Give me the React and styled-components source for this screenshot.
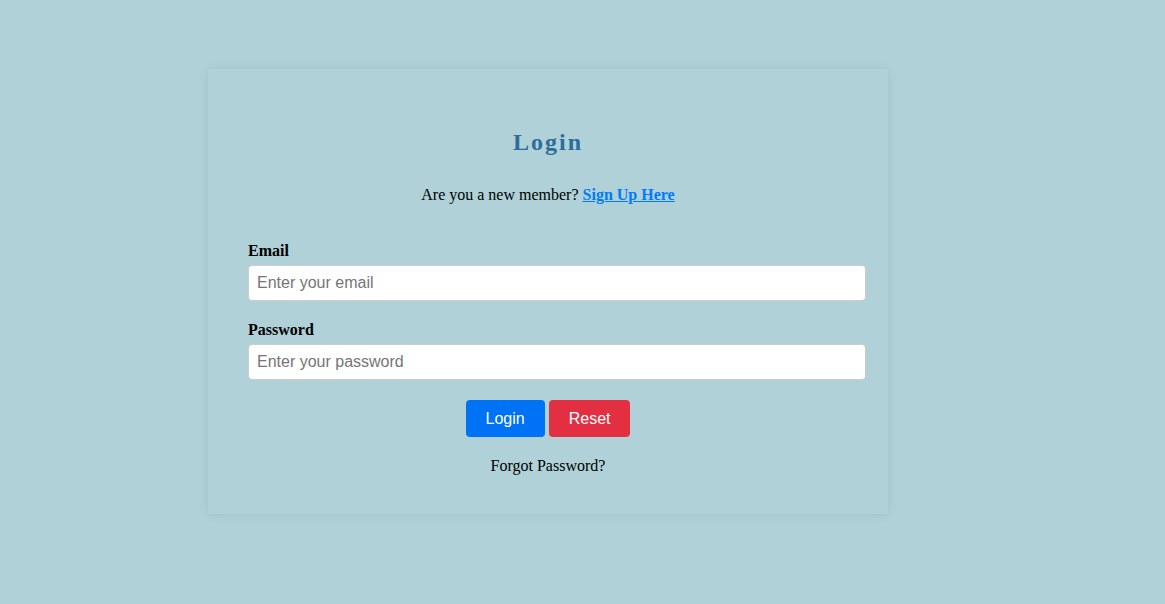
import React from "react";
import styled, { createGlobalStyle } from "styled-components";

const GlobalStyle = createGlobalStyle`
  html, body {
    margin: 0;
    padding: 0;
    background: #afd1d7;
    font-family: "Liberation Serif", "Times New Roman", serif;
    font-size: 16px;
    color: #000;
  }
  * { box-sizing: content-box; }
`;

const Page = styled.div`
  min-height: 604px;
  padding: 69px 0 0 208px;
  box-sizing: border-box;
`;

const Card = styled.div`
  width: 600px;
  padding: 40px 40px 39px;
  background: #afd1d7;
  box-shadow: 0 0 10px rgba(0, 0, 0, 0.08);
`;

const Title = styled.h2`
  margin: 20px 0 30px;
  text-align: center;
  font-size: 24px;
  font-weight: bold;
  letter-spacing: 2px;
  color: #2c6e9b;
`;

const Intro = styled.p`
  margin: 0 0 38px;
  text-align: center;
`;

const SignUpLink = styled.a`
  color: #007bff;
  font-weight: bold;
  text-decoration: underline;
`;

const Field = styled.div`
  margin-bottom: 20px;
`;

const Label = styled.label`
  display: block;
  font-weight: bold;
  margin-bottom: 5px;
`;

const Input = styled.input`
  display: block;
  width: 100%;
  padding: 8px;
  margin: 0;
  border: 1px solid #ccc;
  border-radius: 4px;
  background: #fff;
  font-family: "Liberation Sans", Arial, sans-serif;
  font-size: 16px;
  color: #000;
  outline: none;
  &::placeholder {
    color: #757575;
  }
`;

const ButtonRow = styled.div`
  display: flex;
  justify-content: center;
  gap: 4px;
  margin-top: 20px;
`;

const Button = styled.button`
  padding: 10px 20px;
  border: none;
  border-radius: 4px;
  background: ${(p) => (p.$variant === "danger" ? "#e22f42" : "#0072f5")};
  color: #fff;
  font-family: "Liberation Sans", Arial, sans-serif;
  font-size: 16px;
  line-height: 17px;
  cursor: pointer;
`;

const Forgot = styled.p`
  margin: 20px 0 0;
  text-align: center;
`;

export default function App() {
  return (
    <>
      <GlobalStyle />
      <Page>
        <Card>
          <Title>Login</Title>
          <Intro>
            Are you a new member? <SignUpLink href="#">Sign Up Here</SignUpLink>
          </Intro>
          <form onSubmit={(e) => e.preventDefault()}>
            <Field>
              <Label htmlFor="email">Email</Label>
              <Input id="email" type="email" placeholder="Enter your email" />
            </Field>
            <Field>
              <Label htmlFor="password">Password</Label>
              <Input id="password" type="password" placeholder="Enter your password" />
            </Field>
            <ButtonRow>
              <Button type="submit">Login</Button>
              <Button type="reset" $variant="danger">Reset</Button>
            </ButtonRow>
          </form>
          <Forgot>Forgot Password?</Forgot>
        </Card>
      </Page>
    </>
  );
}
